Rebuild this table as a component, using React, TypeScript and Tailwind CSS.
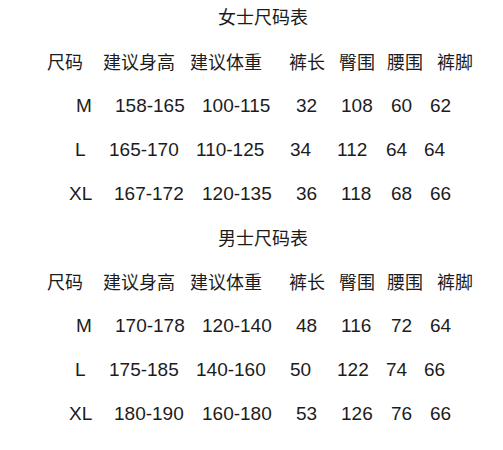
// 尺码表 - 女士 / 男士
const cjk = "font-['Noto_Sans_CJK_SC',sans-serif] text-[18px]";
const num = "font-['Liberation_Sans','Noto_Sans_CJK_SC',sans-serif] text-[19px]";

const header = ["尺码", "建议身高", "建议体重", "裤长", "臀围", "腰围", "裤脚"];
const headerPad = ["pl-0", "pl-0", "pl-0", "pl-0", "pl-[2px]", "pl-[1px]", "pl-[13px]"];

// per-row left offsets inside each column, to match the hand-typed spacing
const rowPads = [
  ["pl-[29px]", "pl-[12px]", "pl-[12px]", "pl-[7px]", "pl-[4px]", "pl-[5px]", "pl-[6px]"],
  ["pl-[28px]", "pl-[6px]", "pl-[6px]", "pl-[1px]", "pl-0", "pl-0", "pl-0"],
  ["pl-[22px]", "pl-[11px]", "pl-[12px]", "pl-[7px]", "pl-[4px]", "pl-[5px]", "pl-[6px]"],
];

const women = [
  ["M", "158-165", "100-115", "32", "108", "60", "62"],
  ["L", "165-170", "110-125", "34", "112", "64", "64"],
  ["XL", "167-172", "120-135", "36", "118", "68", "66"],
];

const men = [
  ["M", "170-178", "120-140", "48", "116", "72", "64"],
  ["L", "175-185", "140-160", "50", "122", "74", "66"],
  ["XL", "180-190", "160-180", "53", "126", "76", "66"],
];

const grid = "grid grid-cols-[56px_87px_99px_48px_49px_38px_1fr] pl-[47px] h-[44px] items-center";

function SizeTable({ rows }: { rows: string[][] }) {
  return (
    <>
      <div className={grid}>
        {header.map((h, i) => (
          <div key={h + i} className={`${cjk} ${headerPad[i]} whitespace-nowrap leading-none`}>
            {h}
          </div>
        ))}
      </div>
      {rows.map((r, ri) => (
        <div key={ri} className={grid}>
          {r.map((v, i) => (
            <div key={i} className={`${num} ${rowPads[ri][i]} whitespace-nowrap leading-none`}>
              {v}
            </div>
          ))}
        </div>
      ))}
    </>
  );
}

export default function App() {
  return (
    <div className="w-[503px] h-[450px] bg-white text-[#1c1c1c] overflow-hidden">
      <div className={`h-[32px] flex items-center pl-[218px] ${cjk} leading-none`}>女士尺码表</div>
      <div className="mt-[7px]">
        <SizeTable rows={women} />
      </div>
      <div className={`h-[44px] flex items-center pl-[218px] ${cjk} leading-none`}>男士尺码表</div>
      <SizeTable rows={men} />
    </div>
  );
}
